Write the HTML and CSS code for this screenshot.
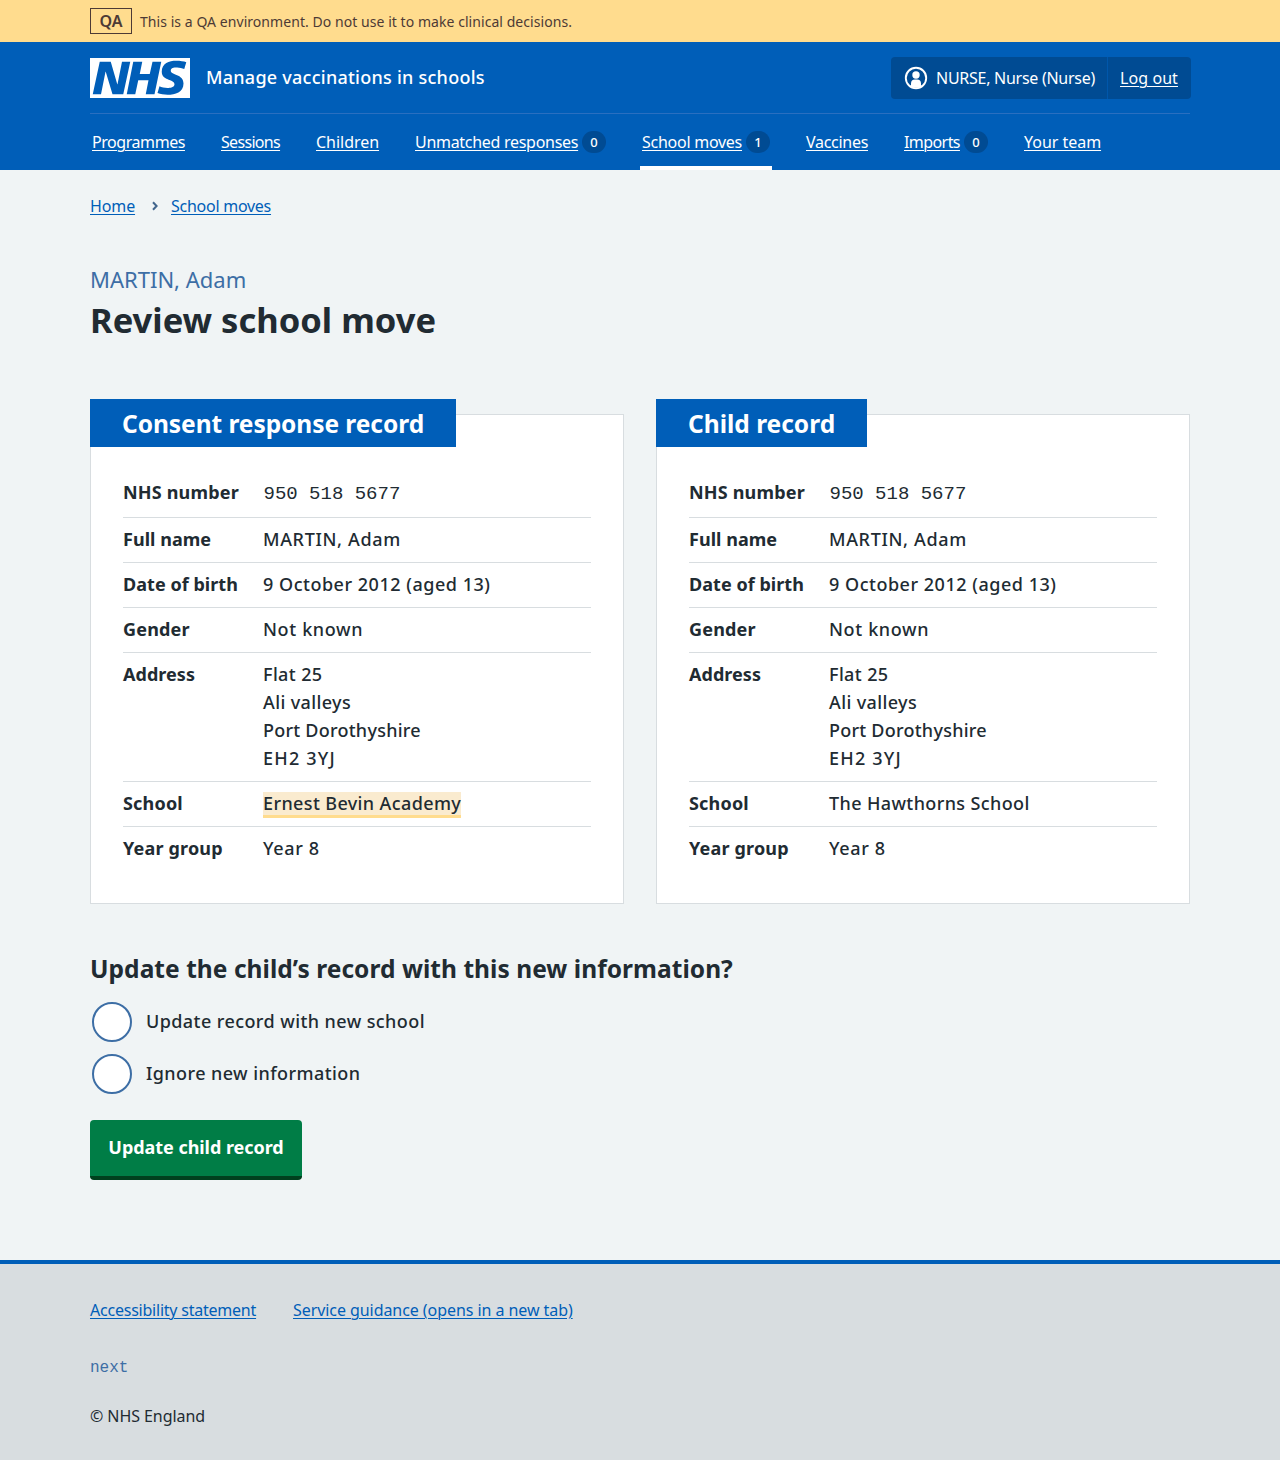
FILE: index.html
```
<!DOCTYPE html>
<html lang="en">
<head>
<meta charset="utf-8">
<title>Review school move – Manage vaccinations in schools</title>
<link rel="stylesheet" href="styles.css">
</head>
<body>
<div class="environment">
  <div class="container environment__inner">
    <strong class="environment__tag">QA</strong>
    <span class="environment__text">This is a QA environment. Do not use it to make clinical decisions.</span>
  </div>
</div>

<header class="header">
  <div class="container">
    <div class="header__top">
      <a class="header__service" href="#">
        <svg class="header__logo" viewBox="0 0 200 80" width="100" height="40" role="img" aria-label="NHS"><path fill="#fff" d="M200 0v80H0V0h200Zm-27.5 5.5c-14.5 0-29 5-29 22 0 10.2 7.7 13.5 14.7 16.3l.7.3c5.4 2 10.1 3.9 10.1 8.4 0 6.5-8.5 7.5-14 7.5s-12.500-1.500-16-3.500L135 70c5.500 2 13.500 3.500 20 3.500 15.500 0 32-4.500 32-22.500 0-19.500-25.500-16.500-25.500-25.500 0-5.500 5.500-6.500 12.500-6.500a35 35 0 0 1 14.500 3l4-13.500c-4.500-2-12-3-20-3Zm-131 2h-22l-14 65H22l9-45h.5l13.500 45h21.500l14-65H64l-9 45h-.5l-13-45Zm63 0h-18l-13 65h17l6-28H117l-5.500 28H129l13.500-65H125L119.500 32h-20l5-24.500Z"/></svg>
        <span class="header__name">Manage vaccinations in schools</span>
      </a>
      <div class="account">
        <span class="account__item account__user">
          <svg class="account__icon" viewBox="0 0 24 24" width="24" height="24" aria-hidden="true"><circle cx="12" cy="12" r="10.200" fill="none" stroke="#fff" stroke-width="1.900"/><circle cx="12" cy="9" r="3.700" fill="#fff"/><path fill="#fff" d="M7 20.500V17.500a4 4 0 0 1 4-4h2a4 4 0 0 1 4 4v3a10.500 10.500 0 0 1-10 0Z"/></svg>
          <span>NURSE, Nurse (Nurse)</span>
        </span>
        <span class="account__item account__logout"><a href="#">Log out</a></span>
      </div>
    </div>
    <nav class="nav">
      <a class="nav__item nav__item--programmes" href="#"><span class="nav__label">Programmes</span></a>
      <a class="nav__item nav__item--sessions" href="#"><span class="nav__label">Sessions</span></a>
      <a class="nav__item nav__item--children" href="#"><span class="nav__label">Children</span></a>
      <a class="nav__item nav__item--unmatched" href="#"><span class="nav__label">Unmatched responses</span><span class="nav__count">0</span></a>
      <a class="nav__item nav__item--moves nav__item--current" href="#"><span class="nav__label">School moves</span><span class="nav__count">1</span></a>
      <a class="nav__item nav__item--vaccines" href="#"><span class="nav__label">Vaccines</span></a>
      <a class="nav__item nav__item--imports" href="#"><span class="nav__label">Imports</span><span class="nav__count">0</span></a>
      <a class="nav__item nav__item--team" href="#"><span class="nav__label">Your team</span></a>
    </nav>
  </div>
</header>

<main class="container main">
  <nav class="breadcrumb">
    <a href="#">Home</a>
    <svg viewBox="0 0 8 10" width="8" height="10" aria-hidden="true"><path d="M2 1.200l3.600 3.800L2 8.800" fill="none" stroke="#41658c" stroke-width="2"/></svg>
    <a class="breadcrumb__current" href="#">School moves</a>
  </nav>

  <h1 class="title"><span class="title__caption">MARTIN, Adam</span>Review school move</h1>

  <div class="cards">
    <section class="card">
      <h2 class="card__heading card__heading--consent">Consent response record</h2>
      <dl class="summary">
        <div class="summary__row summary__row--number"><dt class="spaced">NHS number</dt><dd class="mono">950 518 5677</dd></div>
        <div class="summary__row"><dt>Full name</dt><dd class="wide">MARTIN, Adam</dd></div>
        <div class="summary__row"><dt>Date of birth</dt><dd class="date">9 October 2012 (aged 13)</dd></div>
        <div class="summary__row"><dt class="spaced">Gender</dt><dd class="wide">Not known</dd></div>
        <div class="summary__row"><dt>Address</dt><dd>Flat 25<br>Ali valleys<br><span class="tight">Port Dorothyshire</span><br><span class="postcode">EH2 3YJ</span></dd></div>
        <div class="summary__row"><dt class="spaced">School</dt><dd><mark class="highlight">Ernest Bevin Academy</mark></dd></div>
        <div class="summary__row"><dt class="spaced">Year group</dt><dd class="wide">Year 8</dd></div>
      </dl>
    </section>
    <section class="card">
      <h2 class="card__heading card__heading--child">Child record</h2>
      <dl class="summary">
        <div class="summary__row summary__row--number"><dt class="spaced">NHS number</dt><dd class="mono">950 518 5677</dd></div>
        <div class="summary__row"><dt>Full name</dt><dd class="wide">MARTIN, Adam</dd></div>
        <div class="summary__row"><dt>Date of birth</dt><dd class="date">9 October 2012 (aged 13)</dd></div>
        <div class="summary__row"><dt class="spaced">Gender</dt><dd class="wide">Not known</dd></div>
        <div class="summary__row"><dt>Address</dt><dd>Flat 25<br>Ali valleys<br><span class="tight">Port Dorothyshire</span><br><span class="postcode">EH2 3YJ</span></dd></div>
        <div class="summary__row"><dt class="spaced">School</dt><dd>The Hawthorns School</dd></div>
        <div class="summary__row"><dt class="spaced">Year group</dt><dd class="wide">Year 8</dd></div>
      </dl>
    </section>
  </div>

  <form class="form">
    <h2 class="form__legend">Update the child’s record with this new information?</h2>
    <label class="radio"><input class="radio__input" type="radio" name="decision"><span class="radio__label">Update record with new school</span></label>
    <label class="radio"><input class="radio__input" type="radio" name="decision"><span class="radio__label">Ignore new information</span></label>
    <button class="button" type="button">Update child record</button>
  </form>
</main>

<footer class="footer">
  <div class="container">
    <div class="footer__links">
      <a class="footer__accessibility" href="#">Accessibility statement</a>
      <a class="footer__guidance" href="#">Service guidance (opens in a new tab)</a>
    </div>
    <p class="footer__version">next</p>
    <p class="footer__copyright">© NHS England</p>
  </div>
</footer>
</body>
</html>
```
FILE: styles.css
```
* { box-sizing: border-box; }

body {
  margin: 0;
  min-height: 1460px;
  display: flex;
  flex-direction: column;
  background: #f0f4f5;
  color: #212b32;
  font: 500 18px/28px "Noto Sans", "Open Sans", sans-serif;
}

h1, h2, p, dl, dd { margin: 0; }

a {
  color: #005eb8;
  text-decoration-thickness: 1px;
  text-underline-offset: 2px;
}

.container { width: 1100px; margin: 0 auto; }

/* Environment banner */
.environment { background: #ffdc8e; color: #4d3a35; }
.environment__inner { display: flex; align-items: center; gap: 8px; height: 42px; }
.environment__tag {
  width: 42px;
  height: 26px;
  border: 1px solid #4d3a35;
  font-size: 16px;
  line-height: 24px;
  font-weight: 600;
  text-align: center;
}
.environment__text { padding-top: 2px; font-size: 14px; font-weight: 400; line-height: 24px; letter-spacing: 0.055px; }

/* Header */
.header { background: #005eb8; color: #fff; height: 128px; }
.header a { color: #fff; }
.header__top {
  display: flex;
  justify-content: space-between;
  align-items: center;
  height: 72px;
  border-bottom: 1px solid #2a6fc0;
}
.header__service {
  display: flex;
  align-items: center;
  gap: 16px;
  letter-spacing: 0.25px;
  text-decoration: none;
}
.header__logo { display: block; }
.header__name { padding-bottom: 2px; }
.account {
  display: flex;
  height: 42px;
  margin-right: -1px;
  border-radius: 4px;
  background: #004b93;
  font-size: 16px;
  font-weight: 400;
  line-height: 24px;
}
.account__item { display: flex; align-items: center; }
.account__user { width: 217px; padding-left: 13px; gap: 8px; letter-spacing: -0.27px; white-space: nowrap; border-right: 1px solid #0057ab; }
.account__logout { width: 83px; padding-left: 12px; letter-spacing: 0.08px; }

/* Navigation */
.nav { display: flex; gap: 32px; height: 56px; font-size: 16px; font-weight: 400; line-height: 24px; }
.nav__item {
  display: flex;
  align-items: center;
  gap: 4px;
  padding: 4px 2px 0;
  border-bottom: 4px solid transparent;
  text-decoration: none;
  white-space: nowrap;
}
.nav__item--current { border-color: #fff; }
.nav__label { text-decoration: underline 1px; text-underline-offset: 2px; }
.nav__item--programmes .nav__label { width: 93px; letter-spacing: -0.44px; }
.nav__item--sessions .nav__label { width: 59px; letter-spacing: -0.68px; }
.nav__item--children .nav__label { width: 63px; letter-spacing: -0.03px; }
.nav__item--unmatched .nav__label { width: 163px; letter-spacing: -0.29px; }
.nav__item--moves .nav__label { width: 100px; letter-spacing: -0.26px; }
.nav__item--vaccines .nav__label { width: 62px; letter-spacing: -0.29px; }
.nav__item--imports .nav__label { width: 56px; letter-spacing: -0.57px; }
.nav__item--team .nav__label { width: 77px; letter-spacing: -0.03px; }
.nav__count {
  width: 24px;
  height: 22px;
  border-radius: 11px;
  background: #004b93;
  font-size: 13px;
  font-weight: 500;
  line-height: 22px;
  text-align: center;
}

/* Page content */
.main { flex: 1; }
.breadcrumb { display: flex; align-items: center; gap: 12px; padding-top: 24px; font-size: 16px; font-weight: 400; line-height: 24px; }
.breadcrumb > a:first-child { width: 45px; letter-spacing: -0.12px; }
.breadcrumb svg { margin-left: 4px; }
.breadcrumb__current { letter-spacing: -0.26px; }

.title { padding-top: 44px; font-size: 34.5px; line-height: 48px; font-weight: 700; letter-spacing: 0.02px; }
.title__caption { display: block; font-size: 22px; line-height: 34px; font-weight: 400; letter-spacing: 0; color: #3d6ea5; }

.cards { display: grid; grid-template-columns: 1fr 1fr; gap: 32px; padding-top: 70px; }
.card { height: 490px; padding: 0 32px; border: 1px solid #d8dde0; background: #fff; }
.card__heading {
  height: 48px;
  margin: -16px 0 24px -33px;
  padding: 0 0 0 32px;
  background: #005eb8;
  color: #fff;
  font-size: 24.5px;
  line-height: 50px;
  font-weight: 700;
}
.card__heading--consent { width: 366px; letter-spacing: -0.05px; }
.card__heading--child { width: 211px; }

.summary__row {
  display: grid;
  grid-template-columns: 140px 1fr;
  padding: 7px 0 9px;
  border-bottom: 1px solid #d8dde0;
}
.summary__row--number { padding-bottom: 11px; }
.summary__row:last-child { border-bottom: 0; }
.summary dt { font-weight: 700; letter-spacing: 0.04px; }
.summary .spaced { letter-spacing: 0.18px; }
.summary dd { letter-spacing: 0.38px; }
.summary .mono { padding: 2px 0 0 0.5px; margin-bottom: -2px; font: 400 19px/28px "Liberation Mono", monospace; letter-spacing: 0; }
.summary .wide { letter-spacing: 0.65px; }
.summary .date { letter-spacing: 0.52px; }
.tight { letter-spacing: 0.24px; }
.postcode { letter-spacing: 1.2px; }
.highlight {
  display: block;
  width: 198px;
  height: 26px;
  margin: 3px 0 -1px;
  border-bottom: 3px solid #ffdc8e;
  background: #faebcf;
  color: #212b32;
  line-height: 23px;
  white-space: nowrap;
}

/* Form */
.form { padding-top: 47px; }
.form__legend { height: 51px; font-size: 24.5px; line-height: 36px; font-weight: 700; letter-spacing: 0.05px; }
.radio { display: flex; align-items: center; gap: 14px; height: 40px; margin-bottom: 12px; padding-left: 2px; letter-spacing: 0.42px; }
.radio__label { padding-bottom: 2px; }
.radio__input { appearance: none; width: 40px; height: 40px; margin: 0; border: 2px solid #3d6ea5; border-radius: 50%; background: #fff; }
.button {
  display: block;
  width: 212px;
  height: 60px;
  margin-top: 26px;
  padding: 0 0 2px;
  border: 0;
  border-bottom: 4px solid #00401e;
  border-radius: 4px;
  background: #007f3b;
  background: #007d46;
  color: #fff;
  font: 700 18px/28px "Noto Sans", "Open Sans", sans-serif;
  letter-spacing: -0.05px;
}

/* Footer */
.footer { height: 200px; padding-top: 34px; border-top: 4px solid #005eb8; background: #d8dde0; font-size: 16px; font-weight: 400; line-height: 24px; }
.footer__links { display: flex; }
.footer__accessibility { width: 166px; margin-right: 37px; letter-spacing: -0.225px; white-space: nowrap; }
.footer__guidance { letter-spacing: -0.065px; }
.footer__version { padding-top: 34px; font: 400 16px/24px "Liberation Mono", monospace; color: #3d6ea5; }
.footer__copyright { padding-top: 24px; letter-spacing: -0.07px; }
```
